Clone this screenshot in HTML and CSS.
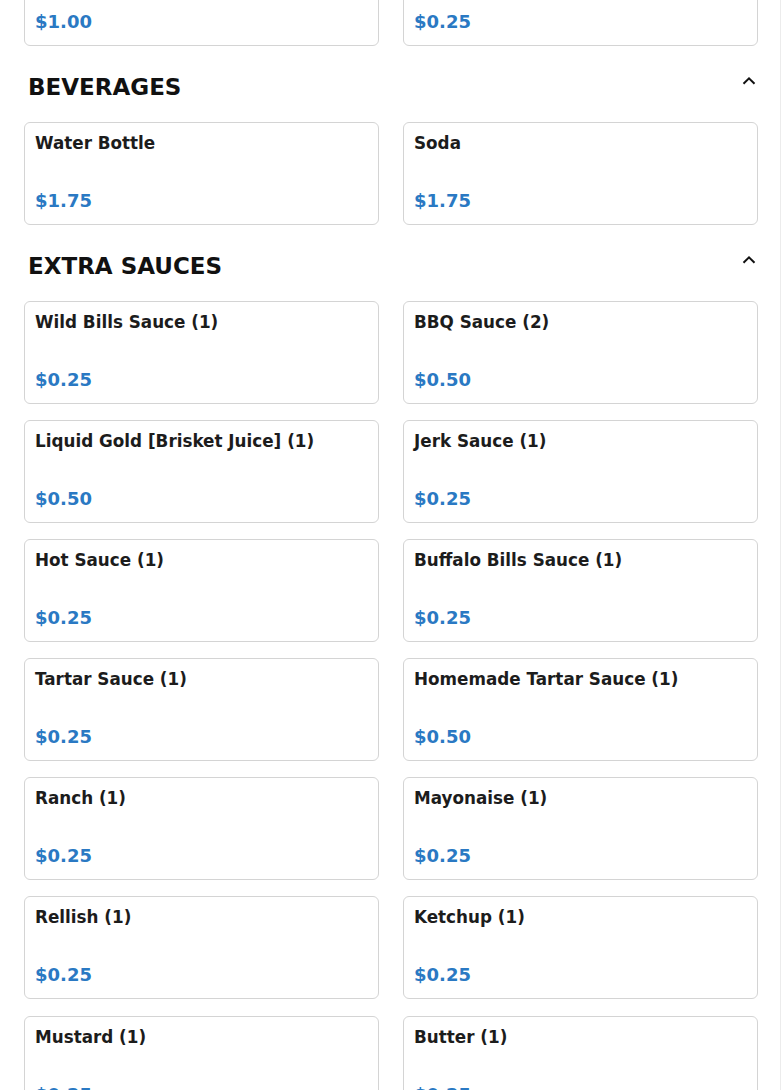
FILE: index.html
```html
<!DOCTYPE html>
<html lang="en">
<head>
<meta charset="utf-8">
<title>Menu</title>
<link rel="stylesheet" href="styles.css">
</head>
<body>
<div class="page">
  <div class="grid grid-top">
    <div class="card"><span class="title"></span><span class="price">$1.00</span></div>
    <div class="card"><span class="title"></span><span class="price">$0.25</span></div>
  </div>

  <section class="section">
    <div class="section-head">
      <h2>BEVERAGES</h2>
      <svg class="chev" width="16" height="16" viewBox="0 0 16 16"><polyline points="2.5,10.8 8,5.3 13.5,10.8" fill="none" stroke="#111" stroke-width="2"/></svg>
    </div>
    <div class="grid">
      <div class="card"><span class="title">Water Bottle</span><span class="price">$1.75</span></div>
      <div class="card"><span class="title">Soda</span><span class="price">$1.75</span></div>
    </div>
  </section>

  <section class="section">
    <div class="section-head">
      <h2>EXTRA SAUCES</h2>
      <svg class="chev" width="16" height="16" viewBox="0 0 16 16"><polyline points="2.5,10.8 8,5.3 13.5,10.8" fill="none" stroke="#111" stroke-width="2"/></svg>
    </div>
    <div class="grid grid-sauces">
      <div class="card"><span class="title">Wild Bills Sauce (1)</span><span class="price">$0.25</span></div>
      <div class="card"><span class="title">BBQ Sauce (2)</span><span class="price">$0.50</span></div>
      <div class="card"><span class="title">Liquid Gold [Brisket Juice] (1)</span><span class="price">$0.50</span></div>
      <div class="card"><span class="title">Jerk Sauce (1)</span><span class="price">$0.25</span></div>
      <div class="card"><span class="title">Hot Sauce (1)</span><span class="price">$0.25</span></div>
      <div class="card"><span class="title">Buffalo Bills Sauce (1)</span><span class="price">$0.25</span></div>
      <div class="card"><span class="title">Tartar Sauce (1)</span><span class="price">$0.25</span></div>
      <div class="card"><span class="title">Homemade Tartar Sauce (1)</span><span class="price">$0.50</span></div>
      <div class="card"><span class="title">Ranch (1)</span><span class="price">$0.25</span></div>
      <div class="card"><span class="title">Mayonaise (1)</span><span class="price">$0.25</span></div>
      <div class="card"><span class="title">Rellish (1)</span><span class="price">$0.25</span></div>
      <div class="card"><span class="title">Ketchup (1)</span><span class="price">$0.25</span></div>
      <div class="card card-last"><span class="title">Mustard (1)</span><span class="price">$0.25</span></div>
      <div class="card card-last"><span class="title">Butter (1)</span><span class="price">$0.25</span></div>
    </div>
  </section>
</div>
</body>
</html>
```

FILE: styles.css
```css
html, body {
  margin: 0;
  padding: 0;
  background: #fff;
}

body {
  font-family: "DejaVu Sans", "Liberation Sans", sans-serif;
  color: #1e1e1e;
  overflow: hidden;
  height: 1090px;
}

.page {
  width: 734px;
  padding: 0 22px 0 24px;
  border-right: 1px solid #ececec;
  min-height: 1090px;
}

.grid {
  display: grid;
  grid-template-columns: 1fr 1fr;
  column-gap: 24px;
  row-gap: 16px;
}

.grid-top {
  margin-top: -57px;
}

.card {
  box-sizing: border-box;
  height: 103px;
  border: 1px solid #d4d4d4;
  border-radius: 6px;
  padding: 9px 10px 10px;
  display: flex;
  flex-direction: column;
  justify-content: space-between;
  background: #fff;
}

.card-last {
  margin-top: 1px;
}

.title {
  font-size: 16.8px;
  font-weight: bold;
  line-height: 22px;
  color: #1c1c1c;
}

.price {
  font-size: 18px;
  font-weight: bold;
  line-height: 27px;
  color: #2a79c3;
}

.section-head {
  display: flex;
  justify-content: space-between;
  align-items: flex-start;
  margin-top: 27px;
  margin-bottom: 21px;
  padding: 0 1px 0 4px;
}

.section-head h2 {
  margin: 0;
  font-size: 23px;
  line-height: 28px;
  font-weight: bold;
  color: #111;
}

.chev {
  display: block;
}
```
